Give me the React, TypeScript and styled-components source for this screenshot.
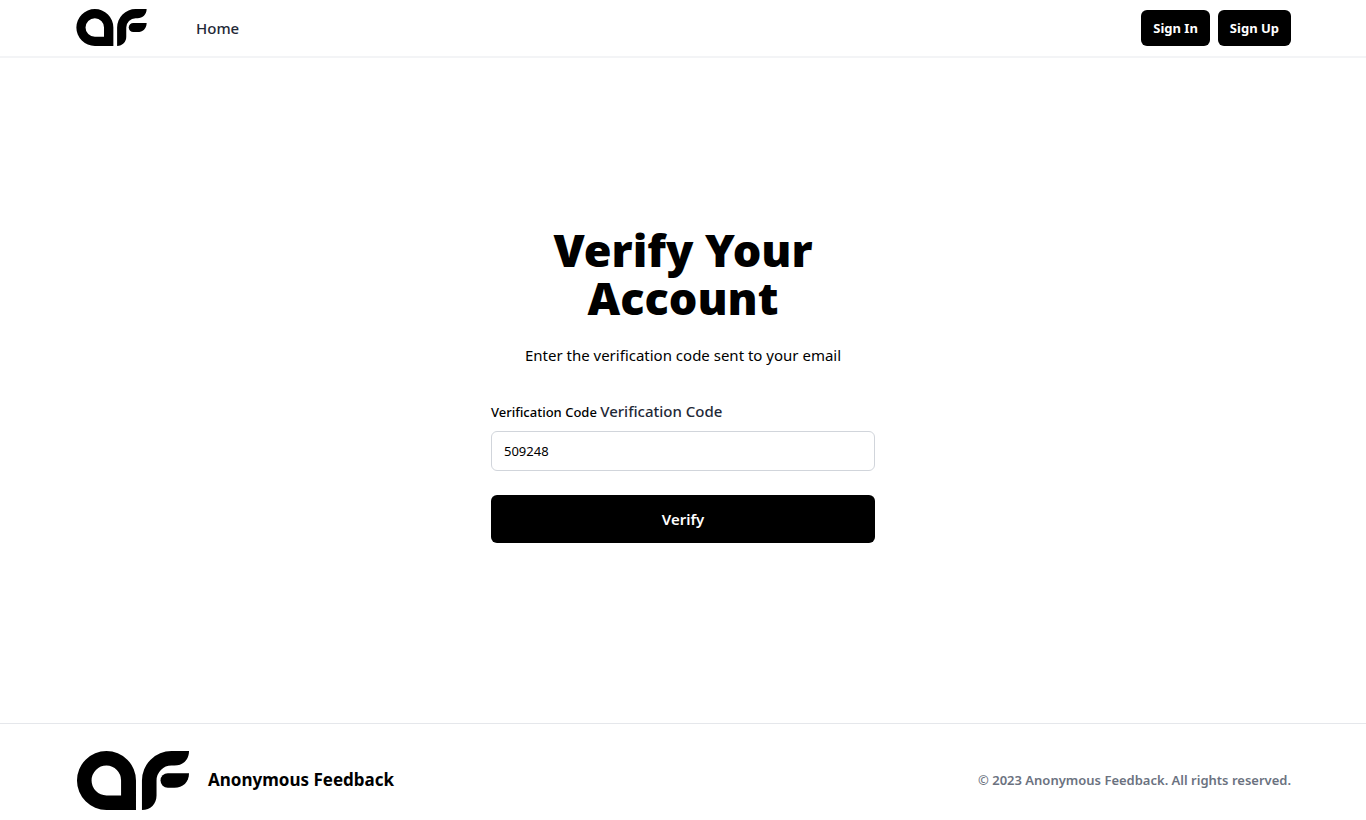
import React, { useState } from "react";
import styled, { createGlobalStyle } from "styled-components";

const GlobalStyle = createGlobalStyle`
  *, *::before, *::after { box-sizing: border-box; }
  body {
    margin: 0;
    background: #fff;
    color: #000;
    font-family: "Segoe UI", "Noto Sans", "Open Sans", sans-serif;
    font-size: 16px;
    line-height: 24px;
  }
`;

const Page = styled.div`
  display: flex;
  flex-direction: column;
  min-height: 100vh;
`;

const Container = styled.div`
  display: flex;
  align-items: center;
  width: 100%;
  max-width: 1280px;
  margin: 0 auto;
  padding: 0 32px;
`;

const Header = styled.header`
  border-bottom: 2px solid #f3f4f6;
`;

const HeaderInner = styled(Container)`
  height: 56px;
  padding-bottom: 1px;
`;

const LogoLink = styled.a`
  display: flex;
  margin-left: 1px;
`;

const Nav = styled.nav`
  flex: 1;
  margin-left: 49px;
`;

const NavLink = styled.a`
  color: #1f2937;
  font-size: 15px;
  font-weight: 500;
  text-decoration: none;
`;

const Actions = styled.div`
  display: flex;
  gap: 8px;
`;

const Button = styled.button<{ $large?: boolean }>`
  width: ${(p) => (p.$large ? "100%" : "auto")};
  height: ${(p) => (p.$large ? 48 : 36)}px;
  padding: 0 12px;
  border: 0;
  border-radius: 6px;
  background: #000;
  color: #fff;
  font-family: inherit;
  font-size: ${(p) => (p.$large ? 15 : 13)}px;
  font-weight: ${(p) => (p.$large ? 600 : 700)};
  white-space: nowrap;
  cursor: pointer;
`;

const Main = styled.main`
  display: flex;
  flex: 1;
  align-items: center;
  justify-content: center;
`;

const Card = styled.section`
  width: 100%;
  max-width: 448px;
  padding: 20px 32px 32px;
`;

const Title = styled.h1`
  margin: 0 0 21px;
  font-size: 45px;
  font-weight: 900;
  line-height: 48px;
  text-align: center;
`;

const Intro = styled.p`
  margin: 0 0 32px;
  font-size: 15px;
  text-align: center;
`;

const Form = styled.form`
  display: flex;
  flex-direction: column;
`;

const Label = styled.label`
  margin-bottom: 7px;
  font-size: 13px;
  font-weight: 500;
`;

const LabelText = styled.span`
  color: #1f2937;
  font-size: 15px;
`;

const Input = styled.input`
  width: 100%;
  height: 40px;
  margin-bottom: 24px;
  padding: 0 12px;
  border: 1px solid #d1d5db;
  border-radius: 6px;
  background: #fff;
  color: #000;
  font-family: inherit;
  font-size: 13px;
`;

const Footer = styled.footer`
  border-top: 1px solid #e5e7eb;
`;

const FooterInner = styled(Container)`
  height: 96px;
  padding-top: 16px;
`;

const Brand = styled.span`
  flex: 1;
  margin-left: 18px;
  font-size: 17px;
  font-weight: 700;
`;

const Copyright = styled.p`
  margin: 0;
  color: #6b7280;
  font-size: 13px;
  font-weight: 600;
`;

function Logo({ width, height }: { width: number; height: number }) {
  return (
    <svg width={width} height={height} viewBox="0 0 338 178" role="img" aria-label="Anonymous Feedback">
      <path
        fillRule="evenodd"
        d="M89 0A89 89 0 0 1 178 89V178H89A89 89 0 0 1 89 0ZM89 44A45 45 0 0 0 89 134H133V89A45 45 0 0 0 89 44Z"
      />
      <path d="M196 178V89A89 89 0 0 1 285 0H338C338 27 319 44 294 44H285A45 45 0 0 0 240 89V134C240 159 222 178 196 178Z" />
      <path d="M274 67H338C338 94 319 111 294 111H274A22 22 0 0 1 274 67Z" />
    </svg>
  );
}

export default function App() {
  const [code, setCode] = useState("509248");
  return (
    <>
      <GlobalStyle />
      <Page>
        <Header>
          <HeaderInner>
            <LogoLink href="#">
              <Logo width={71} height={37} />
            </LogoLink>
            <Nav>
              <NavLink href="#">Home</NavLink>
            </Nav>
            <Actions>
              <Button type="button">Sign In</Button>
              <Button type="button">Sign Up</Button>
            </Actions>
          </HeaderInner>
        </Header>
        <Main>
          <Card>
            <Title>Verify Your Account</Title>
            <Intro>Enter the verification code sent to your email</Intro>
            <Form onSubmit={(e) => e.preventDefault()}>
              <Label htmlFor="code">
                Verification Code <LabelText>Verification Code</LabelText>
              </Label>
              <Input id="code" value={code} onChange={(e) => setCode(e.target.value)} />
              <Button $large type="submit">Verify</Button>
            </Form>
          </Card>
        </Main>
        <Footer>
          <FooterInner>
            <LogoLink href="#">
              <Logo width={114} height={59} />
            </LogoLink>
            <Brand>Anonymous Feedback</Brand>
            <Copyright>© 2023 Anonymous Feedback. All rights reserved.</Copyright>
          </FooterInner>
        </Footer>
      </Page>
    </>
  );
}
